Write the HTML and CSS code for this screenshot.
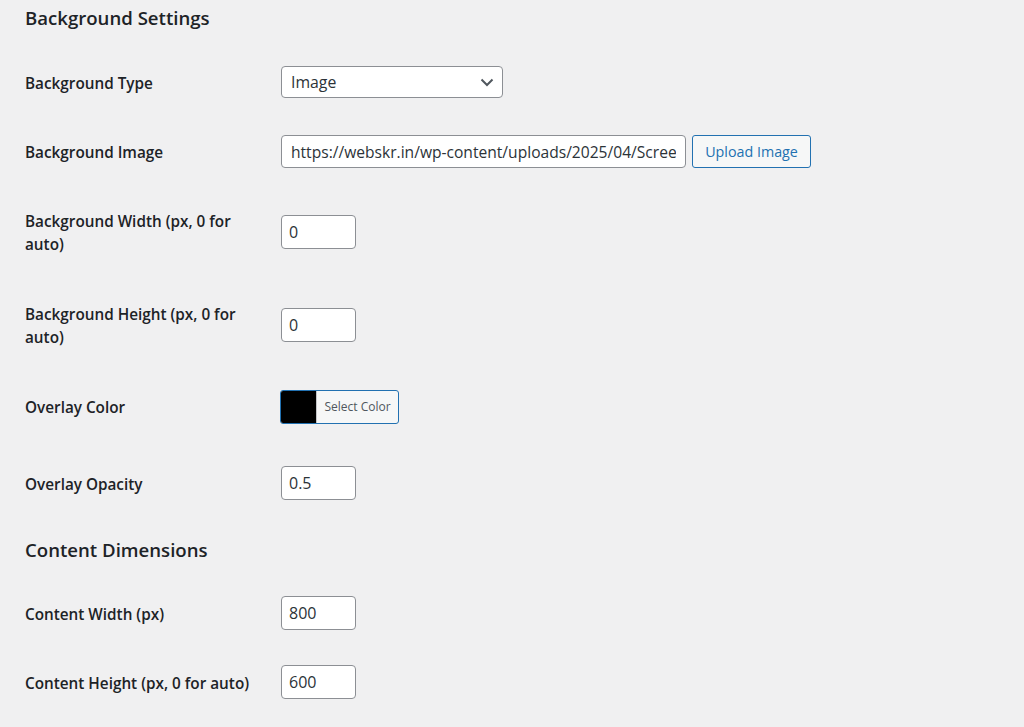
FILE: index.html
```html
<!DOCTYPE html>
<html lang="en">
<head>
<meta charset="utf-8">
<title>Background Settings</title>
<link rel="stylesheet" href="styles.css">
</head>
<body>
<div class="wrap">
  <h2 class="section-title first">Background Settings</h2>
  <div class="form form-bg">
    <label class="label">Background Type</label>
    <div class="field">
      <div class="select">
        <span>Image</span>
        <svg class="chevron" width="14" height="9" viewBox="0 0 14 9"><path d="M1.5 1.5 L7 7 L12.5 1.5" fill="none" stroke="#50575e" stroke-width="2"/></svg>
      </div>
    </div>

    <label class="label">Background Image</label>
    <div class="field">
      <input class="input url" type="text" value="https://webskr.in/wp-content/uploads/2025/04/Screenshot-2025-04-10.png">
      <button class="btn">Upload Image</button>
    </div>

    <label class="label">Background Width (px, 0 for auto)</label>
    <div class="field"><input class="input num" type="text" value="0"></div>

    <label class="label">Background Height (px, 0 for auto)</label>
    <div class="field"><input class="input num" type="text" value="0"></div>

    <label class="label">Overlay Color</label>
    <div class="field">
      <div class="color-result"><span class="swatch"></span><span class="color-text">Select Color</span></div>
    </div>

    <label class="label">Overlay Opacity</label>
    <div class="field"><input class="input num" type="text" value="0.5"></div>
  </div>

  <h2 class="section-title second">Content Dimensions</h2>
  <div class="form form-content">
    <label class="label">Content Width (px)</label>
    <div class="field"><input class="input num" type="text" value="800"></div>

    <label class="label">Content Height (px, 0 for auto)</label>
    <div class="field"><input class="input num" type="text" value="600"></div>
  </div>
</div>
</body>
</html>
```
FILE: styles.css
```css
html, body {
  margin: 0;
  padding: 0;
  background: #f0f0f1;
}
body {
  font-family: "Open Sans", "Noto Sans", sans-serif;
  color: #1d2327;
  width: 1024px;
  height: 727px;
  overflow: hidden;
}
.wrap {
  padding: 0 25px;
}
.section-title {
  margin: 0;
  font-size: 18.6px;
  font-weight: 600;
  color: #1d2327;
}
.section-title.first {
  height: 48px;
  line-height: 26px;
  padding-top: 5px;
  box-sizing: border-box;
}
.section-title.second {
  height: 48px;
  line-height: 48px;
}
.form {
  display: grid;
  grid-template-columns: 256px 1fr;
  align-items: center;
}
.form-bg {
  grid-template-rows: 68px 71px 90px 96px 67px 86px;
}
.form-content {
  grid-template-rows: 78px 60px;
}
.label {
  font-size: 15.3px;
  font-weight: 600;
  line-height: 23px;
  max-width: 238px;
  color: #1d2327;
  padding-top: 2px;
}
.field {
  display: flex;
  align-items: center;
}
.select {
  width: 222px;
  height: 32px;
  box-sizing: border-box;
  border: 1px solid #8c8f94;
  border-radius: 4px;
  background: #fff;
  display: flex;
  align-items: center;
  justify-content: space-between;
  padding: 0 8px 0 9px;
  font-size: 15.8px;
  color: #2c3338;
}
.chevron {
  display: block;
  margin-top: 1px;
}
.input {
  display: block;
  margin: 0;
  height: 34px;
  box-sizing: border-box;
  border: 1px solid #8c8f94;
  border-radius: 4px;
  background: #fff;
  padding: 0 7px;
  font-family: inherit;
  font-size: 16px;
  color: #2c3338;
  outline: none;
}
.input.num {
  width: 75px;
}
.input.url {
  width: 405px;
  height: 33px;
  padding: 0 9px;
  font-size: 15.6px;
}
.btn {
  margin-left: 6px;
  width: 119px;
  height: 33px;
  box-sizing: border-box;
  border: 1px solid #2271b1;
  border-radius: 3px;
  background: #f6f7f7;
  color: #2271b1;
  font-family: inherit;
  font-size: 14.3px;
  padding: 0;
}
.color-result {
  display: flex;
  width: 119px;
  height: 34px;
  box-sizing: border-box;
  border: 1px solid #2271b1;
  border-radius: 3px;
  overflow: hidden;
  margin-left: -1px;
  background: #f6f7f7;
}
.swatch {
  width: 35px;
  background: #000;
}
.color-text {
  flex: 1;
  font-size: 12px;
  line-height: 32px;
  color: #50575e;
  text-align: center;
  border-left: 1px solid #c3c4c7;
}
```
